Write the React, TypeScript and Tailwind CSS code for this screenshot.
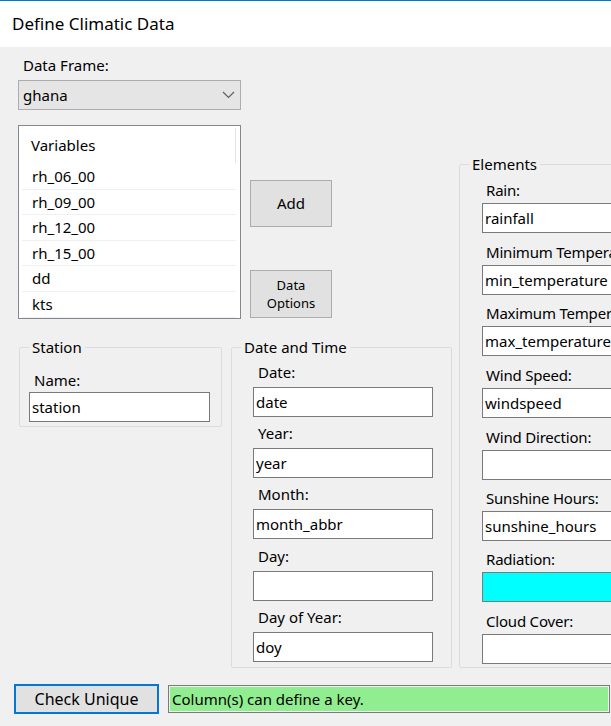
import React from "react";

function TextBox({ value = "", className = "" }: { value?: string; className?: string }) {
  return (
    <div className={"h-[30px] border border-[#7a7a7a] flex items-center pl-[2px] text-[15px] leading-none whitespace-nowrap overflow-hidden " + className}>
      {value}
    </div>
  );
}

const dateItems = [
  { label: "Date:", value: "date", mt: "mt-[5px]" },
  { label: "Year:", value: "year", mt: "mt-[6px]" },
  { label: "Month:", value: "month_abbr", mt: "mt-[6px]" },
  { label: "Day:", value: "", mt: "mt-[7px]" },
  { label: "Day of Year:", value: "doy", mt: "mt-[6px]" },
];

const elementItems = [
  { label: "Rain:", value: "rainfall", mt: "mt-[6px]", bg: "bg-white" },
  { label: "Minimum Temperature:", value: "min_temperature", mt: "mt-[9px]", bg: "bg-white" },
  { label: "Maximum Temperature:", value: "max_temperature", mt: "mt-[8px]", bg: "bg-white" },
  { label: "Wind Speed:", value: "windspeed", mt: "mt-[9px]", bg: "bg-white" },
  { label: "Wind Direction:", value: "", mt: "mt-[9px]", bg: "bg-white" },
  { label: "Sunshine Hours:", value: "sunshine_hours", mt: "mt-[8px]", bg: "bg-white" },
  { label: "Radiation:", value: "", mt: "mt-[8px]", bg: "bg-[#00ffff]" },
  { label: "Cloud Cover:", value: "", mt: "mt-[9px]", bg: "bg-white" },
];

const variables = ["rh_06_00", "rh_09_00", "rh_12_00", "rh_15_00", "dd", "kts"];

export default function App() {
  return (
    <div className="w-[611px] h-[726px] overflow-hidden bg-[#f0f0f0] text-black font-['Noto_Sans',sans-serif] flex flex-col">
      {/* Title bar */}
      <div className="h-[47px] shrink-0 bg-white border-t border-[#0078d7] flex items-center pl-[12px] text-[17px]">
        Define Climatic Data
      </div>

      {/* Body */}
      <div className="flex h-[630px] shrink-0">
        {/* Left area */}
        <div className="w-[459px] shrink-0 flex flex-col pl-[18px]">
          <div className="h-[20px] mt-[8px] pl-[5px] text-[15px] leading-[20px]">Data Frame:</div>
          <div className="mt-[5px] w-[223px] h-[30px] bg-[#e5e5e5] border border-[#adadad] flex items-center justify-between pl-[4px] pr-[5px] text-[15px]">
            <span>ghana</span>
            <svg width="13" height="8" viewBox="0 0 13 8">
              <polyline points="1,1 6.5,6.5 12,1" fill="none" stroke="#606060" strokeWidth="1.2" />
            </svg>
          </div>

          <div className="flex mt-[15px]">
            {/* Listbox */}
            <div className="w-[223px] h-[194px] border border-[#828790] bg-white p-[1px]">
              <div className="relative h-[37px] flex items-center pl-[11px] text-[15px]">
                Variables
                <div className="absolute right-[3px] top-[1px] h-[35px] w-px bg-[#e5e5e5]" />
              </div>
              {variables.map((v) => (
                <div key={v} className="h-[25.6px] flex items-center pl-[10px] text-[15px] border-b border-[#f0f0f0] mx-[2px] mr-[3px]">
                  {v}
                </div>
              ))}
            </div>
            {/* Buttons */}
            <div className="flex flex-col ml-[9px]">
              <div className="mt-[55px] w-[82px] h-[47px] bg-[#e1e1e1] border border-[#adadad] flex items-center justify-center text-[15px]">
                Add
              </div>
              <div className="mt-[43px] w-[82px] h-[48px] bg-[#e1e1e1] border border-[#adadad] flex flex-col items-center justify-center text-[13px] leading-[18px]">
                <span>Data</span>
                <span>Options</span>
              </div>
            </div>
          </div>

          <div className="flex mt-[18px] items-start">
            {/* Station */}
            <fieldset className="ml-[1px] w-[203px] h-[90px] border border-[#dcdcdc] rounded-[2px]">
              <legend className="ml-[9px] px-[3px] text-[15px] leading-[20px]">Station</legend>
              <div className="pl-[9px] flex flex-col">
                <div className="mt-[13px] pl-[5px] h-[20px] text-[15px] leading-[20px]">Name:</div>
                <TextBox value="station" className="mt-[2px] w-[181px] bg-white" />
              </div>
            </fieldset>

            {/* Date and Time */}
            <fieldset className="ml-[9px] w-[221px] h-[331px] border border-[#dcdcdc] rounded-[2px]">
              <legend className="ml-[9px] px-[3px] text-[15px] leading-[20px]">Date and Time</legend>
              <div className="pl-[21px] flex flex-col">
                {dateItems.map((it) => (
                  <div key={it.label} className={"flex flex-col " + it.mt}>
                    <div className="pl-[5px] h-[20px] text-[15px] leading-[20px]">{it.label}</div>
                    <TextBox value={it.value} className="mt-[5px] w-[180px] bg-white" />
                  </div>
                ))}
              </div>
            </fieldset>
          </div>
        </div>

        {/* Elements */}
        <div className="flex-1 pt-[107px]">
          <fieldset className="w-[200px] h-[514px] border border-[#dcdcdc] rounded-[2px]">
            <legend className="ml-[9px] px-[3px] text-[15px] leading-[20px]">Elements</legend>
            <div className="pl-[22px] flex flex-col">
              {elementItems.map((it) => (
                <div key={it.label} className={"flex flex-col " + it.mt}>
                  <div className="pl-[4px] h-[20px] text-[15px] leading-[20px] whitespace-nowrap tracking-[-0.2px]">{it.label}</div>
                  <TextBox value={it.value} className={"mt-[3px] w-[170px] " + it.bg} />
                </div>
              ))}
            </div>
          </fieldset>
        </div>
      </div>

      {/* Footer */}
      <div className="flex items-center mt-[7px] pl-[14px]">
        <div className="w-[145px] h-[30px] bg-[#e1e1e1] border-2 border-[#0078d7] flex items-center justify-center text-[16px]">
          Check Unique
        </div>
        <div className="ml-[9px] w-[442px] h-[28px] border border-[#7a7a7a] p-[1px] bg-[#f0f0f0]">
          <div className="h-full bg-[#90ee90] flex items-center pl-[2px] text-[15px]">Column(s) can define a key.</div>
        </div>
      </div>
    </div>
  );
}
